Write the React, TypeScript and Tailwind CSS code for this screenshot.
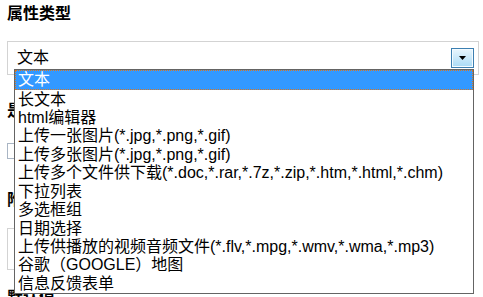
import React from 'react'

const OPTIONS = [
  '文本',
  '长文本',
  'html编辑器',
  '上传一张图片(*.jpg,*.png,*.gif)',
  '上传多张图片(*.jpg,*.png,*.gif)',
  '上传多个文件供下载(*.doc,*.rar,*.7z,*.zip,*.htm,*.html,*.chm)',
  '下拉列表',
  '多选框组',
  '日期选择',
  '上传供播放的视频音频文件(*.flv,*.mpg,*.wmv,*.wma,*.mp3)',
  '谷歌（GOOGLE）地图',
  '信息反馈表单',
]

export default function App() {
  const selected = 0
  return (
    <div className="relative w-[483px] h-[297px] overflow-hidden bg-white text-black font-['Liberation_Sans','Noto_Sans_CJK_SC',sans-serif]">
      <div className="pl-[7px] pt-[4px]">
        <h3 className="text-[16px] font-bold leading-[20px]">属性类型</h3>

        {/* closed select */}
        <div className="mt-[17px] w-[472px] h-[34px] border border-[#d3d3d3] flex items-center pl-[9px] pr-[4px]">
          <span className="flex-1 text-[16px] leading-[20px]">文本</span>
          <div className="w-[23px] h-[20px] border border-[#3c7fb1] bg-gradient-to-b from-[#eaf6fd] to-[#a9dbf6] flex items-center justify-center shadow-[inset_0_0_0_1px_#f4fbff]">
            <svg width="7" height="4" viewBox="0 0 7 4">
              <path d="M0 0H7L3.5 4Z" fill="#000" />
            </svg>
          </div>
        </div>

        <h3 className="mt-[26px] text-[16px] font-bold leading-[20px]">是否必填</h3>
        <div className="mt-[22px] w-[60px] h-[16px] border border-[#a9b5c4]" />

        <h3 className="mt-[31px] text-[16px] font-bold leading-[20px]">附加属性</h3>
        <div className="mt-[18px] w-[300px] h-[42px] border border-[#d3d3d3]" />

        <h3 className="mt-[18px] text-[16px] font-bold leading-[20px]">默认值</h3>
      </div>

      {/* open dropdown list */}
      <div className="absolute left-[14px] top-[69px] w-[460px] h-[225px] border border-[#646464] bg-white flex flex-col">
        {OPTIONS.map((o, i) => (
          <div
            key={o}
            className={
              i === selected
                ? 'flex-1 flex items-center pl-[2px] bg-[#3399ff] text-white border border-dotted border-[#d9761f] text-[16px] leading-[18px] whitespace-nowrap'
                : 'flex-1 flex items-center pl-[3px] text-[16px] leading-[18px] whitespace-nowrap'
            }
          >
            {o}
          </div>
        ))}
      </div>
    </div>
  )
}
